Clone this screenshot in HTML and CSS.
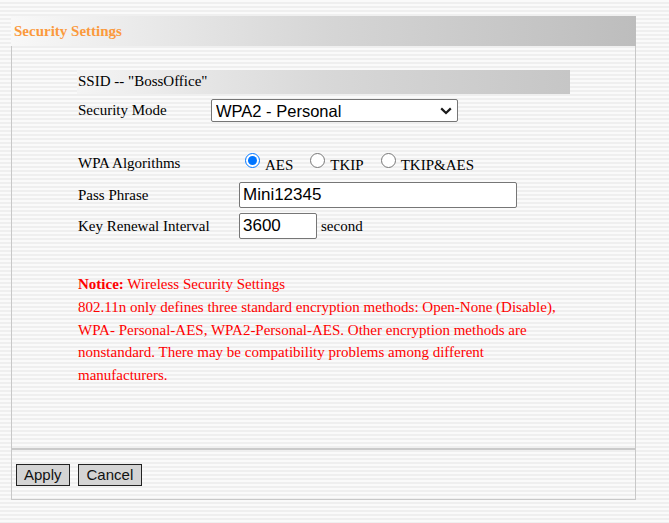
FILE: index.html
```html
<!DOCTYPE html>
<html>
<head>
<meta charset="utf-8">
<link rel="stylesheet" href="styles.css">
</head>
<body>
<div class="panel">
  <div class="panel-head">Security Settings</div>
  <div class="panel-body">
    <div class="ssid-bar">SSID -- "BossOffice"</div>
    <div class="row row-mode">
      <span class="label label-mode">Security Mode</span>
      <span class="select-wrap">
        <select class="mode-select">
          <option>WPA2 - Personal</option>
        </select>
        <svg class="chevron" width="12" height="8" viewBox="0 0 12 8"><path d="M1.2 1.4 L6 6 L10.8 1.4" fill="none" stroke="#1a1a1a" stroke-width="2.2"/></svg>
      </span>
    </div>
    <div class="row row-algo">
      <span class="label label-wide">WPA Algorithms</span>
      <label class="opt opt-aes"><input type="radio" name="alg" checked><span>AES</span></label>
      <label class="opt opt-tkip"><input type="radio" name="alg"><span>TKIP</span></label>
      <label class="opt opt-both"><input type="radio" name="alg"><span>TKIP&amp;AES</span></label>
    </div>
    <div class="row row-pass">
      <span class="label label-wide">Pass Phrase</span>
      <input class="text-input pass-input" type="text" value="Mini12345">
    </div>
    <div class="row row-key">
      <span class="label label-wide">Key Renewal Interval</span>
      <input class="text-input key-input" type="text" value="3600">
      <span class="unit">second</span>
    </div>
    <div class="notice">
      <b>Notice:</b> Wireless Security Settings<br>
      802.11n only defines three standard encryption methods: Open-None (Disable),
      WPA- Personal-AES, WPA2-Personal-AES. Other encryption methods are nonstandard. There may be compatibility problems among different manufacturers.
    </div>
  </div>
  <div class="panel-foot">
    <button class="btn btn-apply">Apply</button>
    <button class="btn btn-cancel">Cancel</button>
  </div>
</div>
</body>
</html>
```

FILE: styles.css
```css
html, body {
  margin: 0;
  padding: 0;
}
body {
  width: 669px;
  height: 523px;
  background: repeating-linear-gradient(to bottom, #fafafa 0, #fafafa 2px, #efefef 2px, #efefef 4px);
  font-family: "Liberation Serif", "Times New Roman", serif;
  font-size: 15px;
  color: #000;
  padding-top: 16px;
  padding-left: 11px;
  box-sizing: border-box;
}
.panel {
  width: 625px;
}
.panel-head {
  height: 30px;
  line-height: 30px;
  padding-left: 3px;
  background: linear-gradient(to right, #f8f8f8, #d6d6d6 50%, #bdbdbd);
  color: #fb9a3d;
  font-weight: bold;
  font-size: 15px;
}
.panel-body {
  height: 404px;
  box-sizing: border-box;
  border-left: 1px solid #c8c8c8;
  border-right: 1px solid #c8c8c8;
  border-bottom: 2px solid #cacaca;
  padding: 24px 0 0 65px;
}
.ssid-bar {
  width: 493px;
  height: 24px;
  line-height: 23px;
  padding-left: 1px;
  box-sizing: border-box;
  background: linear-gradient(to right, #f4f4f4, #d8d8d8 50%, #c6c6c6);
}
.row {
  display: flex;
  align-items: center;
}
.label {
  padding-left: 1px;
  flex: none;
}
.label-mode {
  width: 133px;
}
.label-wide {
  width: 161px;
}
.row-mode {
  margin-top: 5px;
  height: 23px;
}
.select-wrap {
  position: relative;
  display: block;
  width: 247px;
  height: 23px;
}
.mode-select {
  appearance: none;
  -webkit-appearance: none;
  width: 247px;
  height: 23px;
  font-family: "Liberation Sans", Arial, sans-serif;
  font-size: 16.5px;
  border: 1px solid #767676;
  border-radius: 2px;
  background: #fff;
  color: #000;
  padding: 0 4px;
  margin: 0;
}
.chevron {
  position: absolute;
  right: 6px;
  top: 8px;
  pointer-events: none;
}
.row-algo {
  margin-top: 30px;
  height: 22px;
  align-items: flex-end;
}
.row-algo .label {
  align-self: center;
}
.opt {
  display: flex;
  align-items: flex-start;
  margin-right: 17px;
}
.opt input {
  width: 15px;
  height: 15px;
  margin: 0 5px 0 0;
  position: relative;
  top: -4px;
}
.opt-aes input {
  margin-left: 6px;
}
.opt span {
  line-height: 17px;
}
.row-pass {
  margin-top: 8px;
  height: 26px;
}
.row-key {
  margin-top: 5px;
  height: 26px;
}
.text-input {
  height: 26px;
  box-sizing: border-box;
  border: 1px solid #767676;
  border-radius: 2px;
  font-family: "Liberation Sans", Arial, sans-serif;
  font-size: 17px;
  padding: 0 3px;
  margin: 0;
  color: #000;
  background: #fff;
}
.pass-input {
  width: 278px;
}
.key-input {
  width: 78px;
}
.unit {
  margin-left: 4px;
}
.notice {
  margin-top: 34px;
  width: 490px;
  color: #ff0000;
  line-height: 22.75px;
  padding-left: 1px;
}
.panel-foot {
  height: 50px;
  box-sizing: border-box;
  border-left: 1px solid #c8c8c8;
  border-right: 1px solid #c8c8c8;
  border-bottom: 1px solid #c8c8c8;
  padding: 14px 0 0 4px;
  display: flex;
  align-items: flex-start;
  gap: 8px;
}
.btn {
  height: 22px;
  padding: 0 7px;
  margin: 0;
  border: 1px solid #222;
  background: #d4d4d4;
  font-family: "Liberation Sans", Arial, sans-serif;
  font-size: 15px;
  color: #111;
  border-radius: 0;
  line-height: 20px;
}
.btn-cancel {
  padding: 0 8px;
}
```
